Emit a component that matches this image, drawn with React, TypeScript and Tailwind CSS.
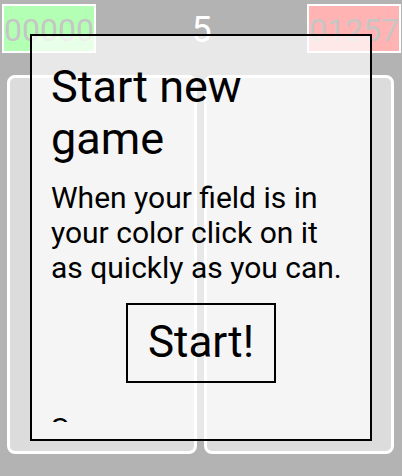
import React from "react";

function ScoreBox({ value, color }: { value: string; color: string }) {
  return (
    <div
      className={`w-[94px] h-[49px] border-2 border-white flex items-center justify-center text-[32px] leading-none text-[#c6c6c6] ${color}`}
    >
      <span className="pt-[3px]">{value}</span>
    </div>
  );
}

function Field() {
  return <div className="flex-1 rounded-[8px] border-[3px] border-white bg-[#dcdcdc]" />;
}

export default function App() {
  return (
    <div
      className="relative w-[402px] h-[476px] overflow-hidden bg-[#b3b3b3]"
      style={{ fontFamily: "Roboto, 'Liberation Sans', sans-serif" }}
    >
      <div className="flex items-start justify-between pl-[2px] pr-[1px] pt-[4px]">
        <ScoreBox value="00000" color="bg-[#b3ffb3]" />
        <div className="pt-[8px] text-[36px] leading-none text-white">5</div>
        <ScoreBox value="01257" color="bg-[#ffb3b3]" />
      </div>

      <div className="mt-[22px] flex h-[379px] gap-[7px] pl-[7px] pr-[8px]">
        <Field />
        <Field />
      </div>

      {/* start dialog over the board */}
      <div className="absolute left-[30px] top-[34px] w-[342px] h-[407px] border-2 border-black bg-white/70 px-[19px] pb-[17px] text-black">
        <div className="h-full overflow-hidden pt-[25px]">
          <h1 className="text-[45px] leading-[51.5px] font-normal">Start new game</h1>
          <p className="mt-[16px] text-[30px] leading-[35px]">
            When your field is in your color click on it as quickly as you can.
          </p>
          <div className="mt-[18px] flex justify-center">
            <button
              type="button"
              className="h-[80px] border-2 border-black px-[20px] text-[44px] leading-[51.5px]"
            >
              Start!
            </button>
          </div>
          <p className="mt-[28px] text-[30px] leading-[35px]">Scores</p>
        </div>
      </div>
    </div>
  );
}
